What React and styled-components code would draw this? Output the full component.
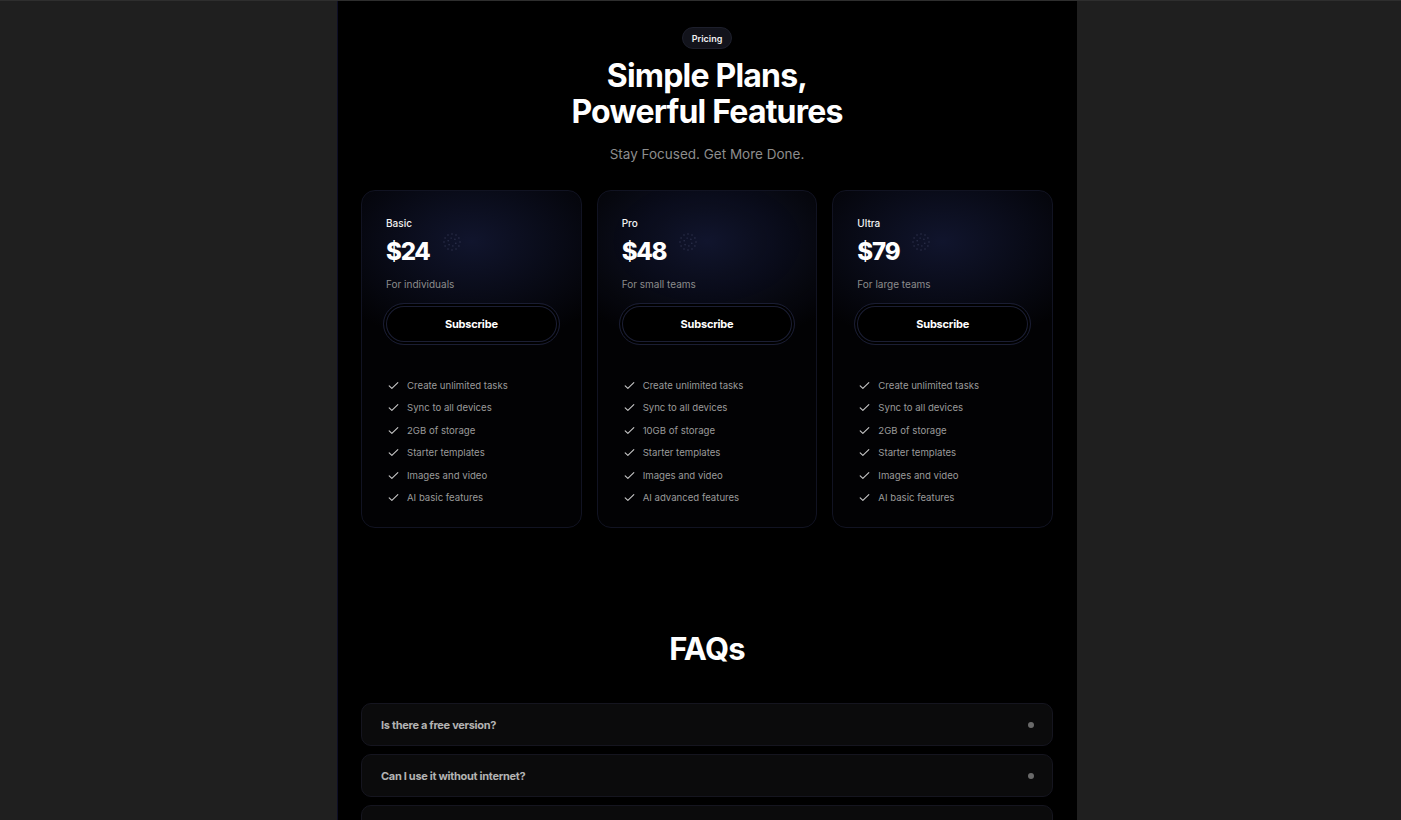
import React from "react";
import styled, { createGlobalStyle } from "styled-components";

const GlobalStyle = createGlobalStyle`
  html, body {
    margin: 0;
    padding: 0;
    background: #1f1f1f;
    font-family: "Inter", "Liberation Sans", sans-serif;
    -webkit-font-smoothing: antialiased;
  }
  body {
    border-top: 1px solid #2e2e2e;
  }
`;

const plans = [
  {
    name: "Basic",
    price: "$24",
    note: "For individuals",
    features: [
      "Create unlimited tasks",
      "Sync to all devices",
      "2GB of storage",
      "Starter templates",
      "Images and video",
      "AI basic features",
    ],
  },
  {
    name: "Pro",
    price: "$48",
    note: "For small teams",
    features: [
      "Create unlimited tasks",
      "Sync to all devices",
      "10GB of storage",
      "Starter templates",
      "Images and video",
      "AI advanced features",
    ],
  },
  {
    name: "Ultra",
    price: "$79",
    note: "For large teams",
    features: [
      "Create unlimited tasks",
      "Sync to all devices",
      "2GB of storage",
      "Starter templates",
      "Images and video",
      "AI basic features",
    ],
  },
];

const faqs = [
  "Is there a free version?",
  "Can I use it without internet?",
  "How secure is my data?",
];

const CheckIcon = () => (
  <svg width="13" height="13" viewBox="0 0 24 24" fill="none" stroke="#c9c9c9" strokeWidth="2" strokeLinecap="round" strokeLinejoin="round">
    <path d="M4 12.5l5 5L20 6.5" />
  </svg>
);

// faint sphere of dots next to the price
const DotRing = () => {
  const dots = [];
  for (let i = 0; i < 12; i++) {
    const a = (i / 12) * Math.PI * 2;
    dots.push([10 + Math.cos(a) * 8, 10 + Math.sin(a) * 8]);
  }
  for (let i = 0; i < 6; i++) {
    const a = (i / 6) * Math.PI * 2 + 0.3;
    dots.push([10 + Math.cos(a) * 4, 10 + Math.sin(a) * 4]);
  }
  return (
    <svg width="20" height="20" viewBox="0 0 20 20">
      {dots.map(([x, y], i) => (
        <circle key={i} cx={x} cy={y} r="0.7" fill="#3a3f5c" />
      ))}
    </svg>
  );
};

const App = () => {
  return (
    <>
      <GlobalStyle />
      <Page>
        <Column>
          <Hero>
            <Badge>Pricing</Badge>
            <Title>
              Simple Plans,
              <br />
              Powerful Features
            </Title>
            <Subtitle>Stay Focused. Get More Done.</Subtitle>
          </Hero>

          <Cards>
            {plans.map((p) => (
              <Card key={p.name}>
                <CardHead>
                  <PlanName>{p.name}</PlanName>
                  <PriceRow>
                    <Price>{p.price}</Price>
                    <DotWrap>
                      <DotRing />
                    </DotWrap>
                  </PriceRow>
                  <PlanNote>{p.note}</PlanNote>
                </CardHead>
                <SubscribeButton>Subscribe</SubscribeButton>
                <Features>
                  {p.features.map((f) => (
                    <Feature key={f}>
                      <CheckIcon />
                      <span>{f}</span>
                    </Feature>
                  ))}
                </Features>
              </Card>
            ))}
          </Cards>

          <FaqTitle>FAQs</FaqTitle>
          <FaqList>
            {faqs.map((q) => (
              <FaqItem key={q}>
                <span>{q}</span>
                <FaqDot />
              </FaqItem>
            ))}
          </FaqList>
        </Column>
      </Page>
    </>
  );
};

export default App;

const Page = styled.div`
  display: flex;
  justify-content: center;
  padding-left: 13px;
  min-height: 819px;
`;

const Column = styled.div`
  width: 740px;
  background: #000;
  border-left: 1px solid #0e0e26;
  box-sizing: border-box;
  padding: 26px 24px 40px 23px;
  display: flex;
  flex-direction: column;
`;

const Hero = styled.div`
  display: flex;
  flex-direction: column;
  align-items: center;
`;

const Badge = styled.div`
  height: 22px;
  padding: 0 9px;
  border-radius: 11px;
  background: #12131b;
  border: 1px solid #1d1f2c;
  box-sizing: border-box;
  display: flex;
  align-items: center;
  color: #f0f0f0;
  font-size: 9px;
  font-weight: 600;
`;

const Title = styled.h1`
  margin: 9px 0 0;
  color: #fff;
  font-size: 32px;
  line-height: 36px;
  font-weight: 700;
  letter-spacing: -0.8px;
  text-align: center;
`;

const Subtitle = styled.p`
  margin: 14px 0 0;
  color: #8d8d8d;
  font-size: 13.5px;
  line-height: 20px;
`;

const Cards = styled.div`
  margin-top: 26px;
  display: grid;
  grid-template-columns: repeat(3, minmax(0, 1fr));
  gap: 15px;
`;

const Card = styled.div`
  height: 338px;
  min-width: 0;
  box-sizing: border-box;
  border-radius: 14px;
  border: 1px solid #111322;
  background: radial-gradient(
      ellipse 160px 105px at 50% 15%,
      rgba(26, 33, 72, 0.6),
      rgba(0, 0, 0, 0) 100%
    ),
    #020204;
  padding: 25px 21px 0 21px;
  display: flex;
  flex-direction: column;
`;

const CardHead = styled.div`
  padding-left: 3px;
`;

const PlanName = styled.div`
  color: #f2f2f2;
  font-size: 10px;
  font-weight: 500;
  line-height: 14px;
`;

const PriceRow = styled.div`
  display: flex;
  align-items: flex-start;
  margin-top: 7px;
`;

const Price = styled.div`
  color: #fff;
  font-size: 24px;
  font-weight: 800;
  letter-spacing: -1.2px;
  line-height: 30px;
`;

const DotWrap = styled.div`
  margin: -5px 0 0 12px;
  opacity: 0.8;
`;

const PlanNote = styled.div`
  margin-top: 11px;
  color: #8c8c8c;
  font-size: 10px;
  line-height: 13px;
`;

const SubscribeButton = styled.button`
  margin-top: 12px;
  width: 100%;
  height: 42px;
  border-radius: 21px;
  border: 1px solid #1a1d33;
  background: #000;
  box-shadow: inset 0 0 0 2px #000, inset 0 0 0 3px #1b1e34;
  color: #fff;
  font-family: "Inter", "Liberation Sans", sans-serif;
  font-size: 11px;
  font-weight: 700;
  letter-spacing: -0.2px;
  cursor: pointer;
`;

const Features = styled.ul`
  list-style: none;
  margin: 34px 0 0;
  padding: 0 0 0 4px;
  display: flex;
  flex-direction: column;
  gap: 9.4px;
`;

const Feature = styled.li`
  display: flex;
  align-items: center;
  gap: 7px;
  color: #9a9a9a;
  font-size: 9.6px;
  line-height: 13px;
`;

const FaqTitle = styled.h2`
  margin: 101px 0 0;
  text-align: center;
  color: #fff;
  font-size: 31px;
  line-height: 40px;
  font-weight: 700;
  letter-spacing: -0.8px;
`;

const FaqList = styled.div`
  margin-top: 34px;
  display: flex;
  flex-direction: column;
  gap: 8px;
`;

const FaqItem = styled.div`
  height: 43px;
  box-sizing: border-box;
  border-radius: 10px;
  background: #0b0b0c;
  border: 1px solid #15151f;
  padding: 0 18px 0 19px;
  display: flex;
  align-items: center;
  justify-content: space-between;
  color: #b3b3b3;
  font-size: 11px;
  font-weight: 700;
  letter-spacing: -0.3px;
`;

const FaqDot = styled.span`
  width: 6px;
  height: 6px;
  border-radius: 50%;
  background: #6a6a6a;
`;
